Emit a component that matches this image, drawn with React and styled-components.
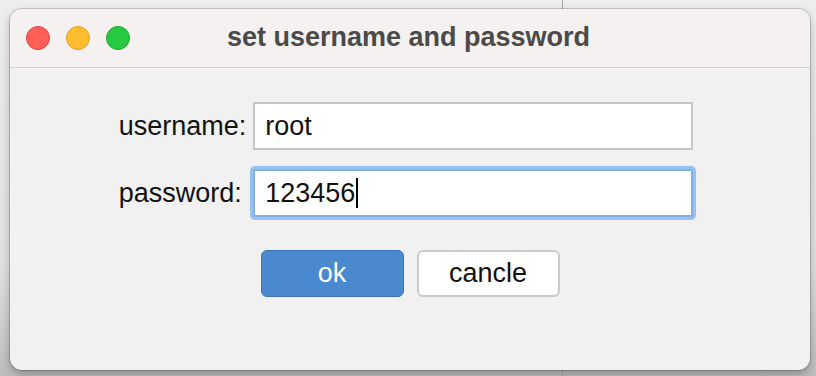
import React from 'react';
import styled, { createGlobalStyle } from 'styled-components';

const GlobalStyle = createGlobalStyle`
  html, body {
    margin: 0;
    padding: 0;
  }
  body {
    font-family: "Liberation Sans", Arial, sans-serif;
    background:
      linear-gradient(to right, transparent 562px, #a3a3a3 562px, #a3a3a3 563px, transparent 563px),
      linear-gradient(to bottom, #eeeeee 0%, #e2e2e2 70%, #bdbdbd 100%);
    width: 816px;
    height: 376px;
    overflow: hidden;
  }
`;

const Page = styled.div`
  box-sizing: border-box;
  height: 376px;
  padding: 9px 6px 6px 10px;
`;

const Window = styled.div`
  width: 800px;
  height: 361px;
  border-radius: 12px;
  overflow: hidden;
  background: #f1f1f1;
  box-shadow: 0 0 0 1px rgba(0, 0, 0, 0.16), 0 4px 10px rgba(0, 0, 0, 0.28);
  display: flex;
  flex-direction: column;
`;

const TitleBar = styled.div`
  height: 58px;
  flex-shrink: 0;
  background: #f4f1f0;
  border-bottom: 1px solid #d4d1d0;
  display: grid;
  grid-template-columns: 1fr auto 1fr;
  align-items: center;
`;

const Lights = styled.div`
  display: flex;
  gap: 16px;
  padding-left: 16px;
`;

const Light = styled.span`
  width: 24px;
  height: 24px;
  border-radius: 50%;
  box-sizing: border-box;
  background: ${p => p.$fill};
  border: 1px solid ${p => p.$edge};
`;

const Title = styled.div`
  font-size: 27px;
  font-weight: bold;
  color: #4a4a4a;
  margin-top: -1px;
  margin-right: 3px;
`;

const Body = styled.div`
  flex: 1;
  display: flex;
  flex-direction: column;
  align-items: center;
  padding-top: 34px;
  padding-right: 8px;
`;

const Form = styled.div`
  display: grid;
  grid-template-columns: auto 440px;
  grid-auto-rows: 48px;
  column-gap: 7px;
  row-gap: 19px;
  align-items: center;
`;

const Label = styled.label`
  justify-self: start;
  font-size: 27px;
  color: #111;
`;

const Field = styled.div`
  box-sizing: border-box;
  height: 48px;
  background: #fff;
  border: 2px solid ${p => (p.$focused ? '#86aee3' : '#c6c6c6')};
  box-shadow: ${p => (p.$focused ? '0 0 0 3px #95c1f3' : 'none')};
  border-radius: ${p => (p.$focused ? '2px' : '0')};
  padding-left: 10px;
  display: flex;
  align-items: center;
  font-size: 27px;
  color: #111;
`;

const Caret = styled.span`
  width: 2px;
  height: 30px;
  background: #000;
  margin-left: 1px;
`;

const Buttons = styled.div`
  display: flex;
  gap: 13px;
  margin-top: 33px;
  padding-left: 8px;
`;

const Button = styled.button`
  box-sizing: border-box;
  width: 143px;
  height: 47px;
  border-radius: 6px;
  font-family: "Liberation Sans", Arial, sans-serif;
  font-size: 27px;
  padding: 0;
  color: ${p => (p.$primary ? '#fff' : '#111')};
  background: ${p => (p.$primary ? '#4a89cd' : '#fff')};
  border: ${p => (p.$primary ? '1px solid #3b73b6' : '2px solid #cacaca')};
`;

export default function App() {
  return (
    <>
      <GlobalStyle />
      <Page>
        <Window>
          <TitleBar>
            <Lights>
              <Light $fill="#fe5f57" $edge="#e0443e" />
              <Light $fill="#febc2e" $edge="#dea123" />
              <Light $fill="#28c840" $edge="#1aab29" />
            </Lights>
            <Title>set username and password</Title>
            <div />
          </TitleBar>
          <Body>
            <Form>
              <Label>username:</Label>
              <Field>root</Field>
              <Label>password:</Label>
              <Field $focused>
                123456
                <Caret />
              </Field>
            </Form>
            <Buttons>
              <Button $primary>ok</Button>
              <Button>cancle</Button>
            </Buttons>
          </Body>
        </Window>
      </Page>
    </>
  );
}
